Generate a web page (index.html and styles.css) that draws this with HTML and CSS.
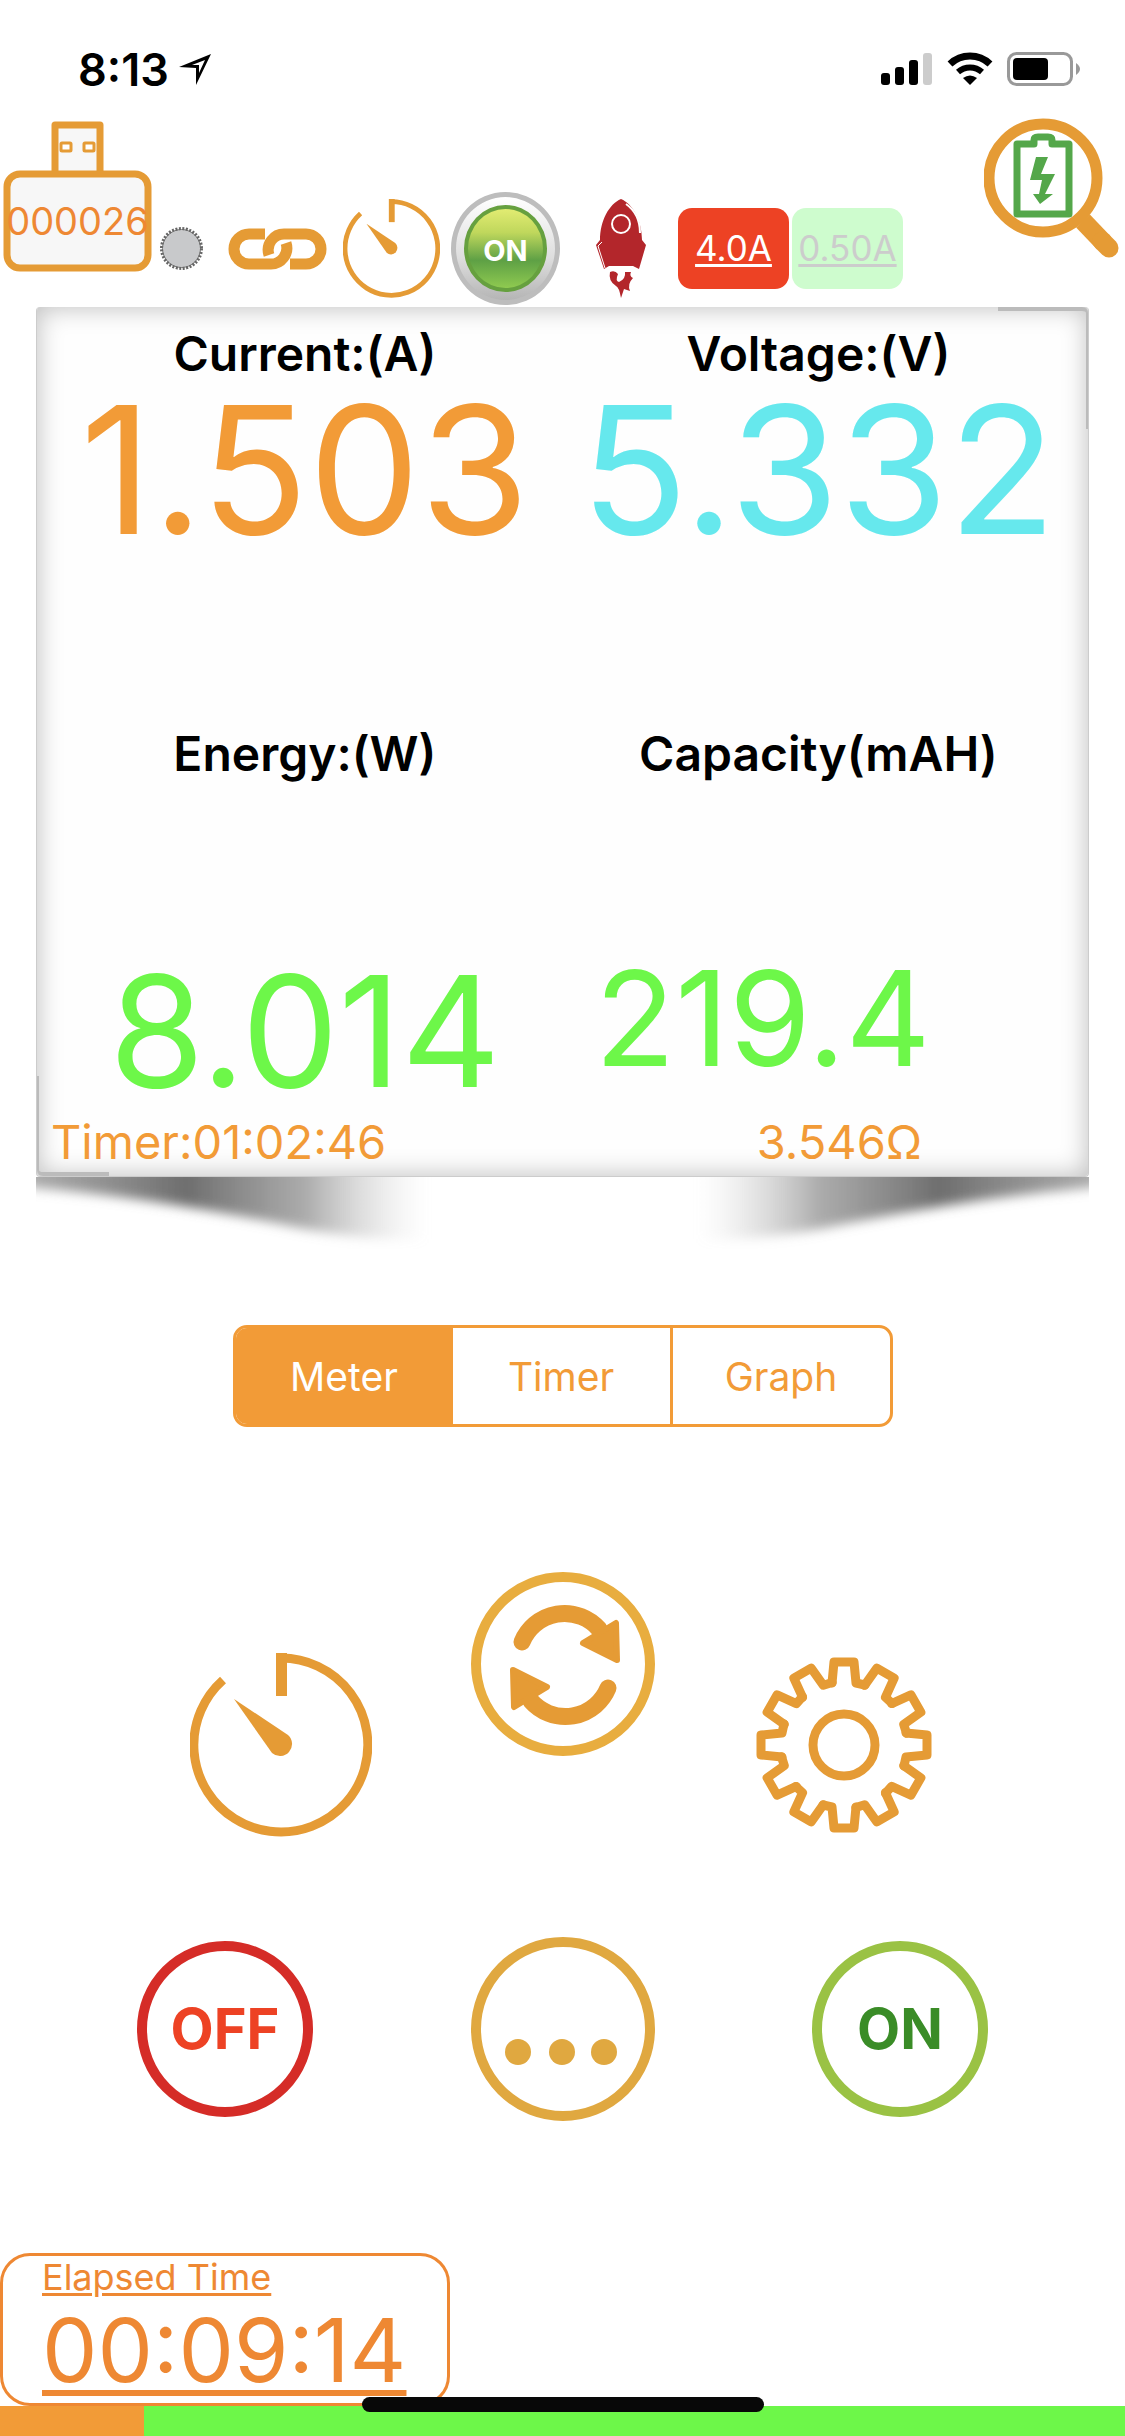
FILE: index.html
```html
<!DOCTYPE html>
<html lang="en">
<head>
    <meta charset="UTF-8">
    <meta name="viewport" content="width=device-width, initial-scale=1.0">
    <title>USB Meter</title>
    <link rel="stylesheet" href="styles.css">
</head>
<body>
    <!-- shared shapes -->
    <svg class="defs" aria-hidden="true">
        <symbol id="gauge" viewBox="-91 -92 182 184" preserveAspectRatio="none">
            <path d="M0 -87 A87 87 0 1 1 -58 -65" fill="none" stroke="#e59b35" stroke-width="9"/>
            <path d="M-5 -92 H6 V-49 H-5 Z" fill="#e59b35"/>
            <path d="M-47 -46 L7 -10 A12 12 0 1 1 -9 8 Z" fill="#e59b35"/>
        </symbol>
        <polyline id="tooth" points="-12,-62 -10,-83 10,-83 12,-62 21,-60"/>
        <g id="arrow">
            <path d="M-41 -22 A46 46 0 0 1 36 -35" fill="none" stroke-width="17" stroke-linecap="round"/>
            <path d="M53 -41 L54 -4 L20 -21 Z" stroke-width="6" stroke-linejoin="round"/>
        </g>
    </svg>

    <header class="status">
        <span class="clock">8:13</span>
        <svg class="location" width="32" height="31" viewBox="0 0 32 31">
            <path d="M0 13 L32 0 L17 31 V14 Z M13 11 L20 11 L20 19 L26 6 Z" fill-rule="evenodd"/>
        </svg>
        <div class="status-icons">
            <svg width="52" height="34" viewBox="0 0 52 34">
                <rect y="21" width="9" height="12" rx="3"/>
                <rect x="14" y="15" width="9" height="18" rx="3"/>
                <rect x="28" y="8" width="9" height="25" rx="3"/>
                <rect x="42" y="1" width="9" height="32" rx="3" fill="#ccc"/>
            </svg>
            <svg width="46" height="34" viewBox="0 0 46 34">
                <path d="M3 12 A29 29 0 0 1 43 12" fill="none" stroke="#000" stroke-width="7"/>
                <path d="M11 20 A18 18 0 0 1 35 20" fill="none" stroke="#000" stroke-width="6"/>
                <path d="M16 26 Q23 21 30 26 L23 33 Z"/>
            </svg>
            <svg width="74" height="34" viewBox="0 0 74 34">
                <rect x="1.5" y="1.5" width="63" height="31" rx="8" fill="none" stroke="#999" stroke-width="3"/>
                <rect x="6" y="6" width="35" height="22" rx="4"/>
                <path d="M69 11 Q77 17 69 23 Z" fill="#999"/>
            </svg>
        </div>
    </header>

    <nav class="toolbar">
        <div class="usb">
            <svg width="149" height="151" viewBox="0 0 149 151">
                <path d="M52 53 V4 H97 V53" fill="#f7f7f7" stroke="#e59b35" stroke-width="7" stroke-linejoin="round"/>
                <rect x="4" y="53" width="141" height="94" rx="13" fill="#f7f7f7" stroke="#e59b35" stroke-width="7"/>
                <rect x="58" y="22" width="10" height="8" rx="1" fill="#fff" stroke="#e59b35" stroke-width="3"/>
                <rect x="81" y="22" width="10" height="8" rx="1" fill="#fff" stroke="#e59b35" stroke-width="3"/>
            </svg>
            <span class="usb-id">000026</span>
        </div>
        <div class="tools">
            <svg class="dot" width="43" height="43" viewBox="0 0 43 43">
                <circle cx="21.5" cy="21.5" r="19" fill="#c8c9cb" stroke="#777" stroke-width="1"/>
                <circle cx="21.5" cy="21.5" r="20" fill="none" stroke="#666" stroke-width="3" stroke-dasharray="2 1.5"/>
            </svg>
            <svg class="chain" width="99" height="42" viewBox="0 0 99 42">
                <g fill="none" stroke="#e59b35" stroke-width="11">
                    <path d="M37 6 H21 A15 15 0 0 0 21 36 H42 A16 16 0 0 0 58 15"/>
                    <path d="M62 36 H78 A15 15 0 0 0 78 6 H57 A16 16 0 0 0 41 27"/>
                </g>
            </svg>
            <button class="icon-button" aria-label="Timer"><svg width="97" height="99"><use href="#gauge"/></svg></button>
            <button class="power"><span>ON</span></button>
            <svg class="rocket" width="51" height="100" viewBox="0 0 51 100">
                <path d="M25 0 C13 5 4 22 4 41 L0 46 L8 70 L13 67 H37 L43 70 L50 46 L46 41 C46 22 37 5 25 0 Z" fill="#b3262b"/>
                <circle cx="25" cy="25" r="9" fill="none" stroke="#fff" stroke-width="2"/>
                <path d="M30 5 Q44 15 44 34" fill="none" stroke="#fff" stroke-width="2"/>
                <path d="M6 43 L2 47 L9 69" fill="none" stroke="#fff" stroke-width="1"/>
                <path d="M14 73 Q19 71 22 75 Q19 82 23 83 Q30 80 29 73 H35 Q33 77 37 79 Q31 85 34 92 L28 90 L25 99 Q23 88 20 87 Q12 82 14 73 Z" fill="#b3262b"/>
            </svg>
            <a class="limit limit-max" href="#">4.0A</a>
            <a class="limit limit-min" href="#">0.50A</a>
        </div>
        <button class="icon-button search" aria-label="Battery details">
            <svg width="136" height="140" viewBox="0 0 136 140">
                <circle cx="59" cy="60" r="54" fill="#fff" stroke="#e59b35" stroke-width="11"/>
                <path d="M99 103 L120 125" stroke="#e59b35" stroke-width="19"/>
                <path d="M118 123 L125 130" stroke="#e59b35" stroke-width="19" stroke-linecap="round"/>
                <path d="M33 26 H50 V22 Q50 19 54 19 H64 Q68 19 68 22 V26 H85 V96 H33 Z" fill="none" stroke="#54a74a" stroke-width="7" stroke-linejoin="round"/>
                <path d="M52 39 H64 L57 56 H71 L61 76 H69 L56 86 L49 76 H55 L58 62 H46 Z" fill="#54a74a"/>
            </svg>
        </button>
    </nav>

    <main>
        <section class="panel">
            <h2>Current:(A)</h2>
            <h2>Voltage:(V)</h2>
            <div class="value current">1.503</div>
            <div class="value voltage">5.332</div>
            <h2>Energy:(W)</h2>
            <h2>Capacity(mAH)</h2>
            <div class="value energy">8.014</div>
            <div class="value capacity">219.4</div>
            <div class="note">Timer:01:02:46</div>
            <div class="note resistance">3.546Ω</div>
        </section>
        <!-- curled paper shadow -->
        <div class="curl">
            <svg width="440" height="72" viewBox="0 0 440 72">
                <defs>
                    <linearGradient id="fade">
                        <stop offset="0" stop-color="#999" stop-opacity="0.8"/>
                        <stop offset="0.4" stop-color="#6e6e6e"/>
                        <stop offset="0.7" stop-color="#888" stop-opacity="0.7"/>
                        <stop offset="1" stop-color="#ccc" stop-opacity="0"/>
                    </linearGradient>
                    <filter id="soft" x="-10%" y="-40%" width="120%" height="180%">
                        <feGaussianBlur stdDeviation="6"/>
                    </filter>
                </defs>
                <path d="M-10 -12 H390 V62 Q320 64 240 46 Q110 20 -10 10 Z" fill="url(#fade)" filter="url(#soft)"/>
            </svg>
            <svg class="curl-right" width="440" height="72" viewBox="0 0 440 72">
                <path d="M-10 -12 H390 V62 Q320 64 240 46 Q110 20 -10 10 Z" fill="url(#fade)" filter="url(#soft)"/>
            </svg>
        </div>

        <div class="tabs" role="tablist">
            <button class="tab active" role="tab" aria-selected="true">Meter</button>
            <button class="tab" role="tab">Timer</button>
            <button class="tab" role="tab">Graph</button>
        </div>

        <div class="actions actions-top">
            <button class="icon-button" aria-label="Timer"><svg width="182" height="184"><use href="#gauge"/></svg></button>
            <button class="icon-button raised" aria-label="Refresh">
                <svg width="184" height="184" viewBox="-92 -92 184 184">
                    <circle r="87" fill="none" stroke="#e8ad3f" stroke-width="10"/>
                    <g fill="#e59b35" stroke="#e59b35">
                        <use href="#arrow"/>
                        <use href="#arrow" transform="rotate(180 2 1)"/>
                    </g>
                </svg>
            </button>
            <button class="icon-button" aria-label="Settings">
                <svg width="184" height="184" viewBox="-92 -92 184 184">
                    <g fill="none" stroke="#e59b35" stroke-width="9" stroke-linejoin="round" stroke-linecap="round">
                        <circle r="31"/>
                        <use href="#tooth"/>
                        <use href="#tooth" transform="rotate(30)"/>
                        <use href="#tooth" transform="rotate(60)"/>
                        <use href="#tooth" transform="rotate(90)"/>
                        <use href="#tooth" transform="rotate(120)"/>
                        <use href="#tooth" transform="rotate(150)"/>
                        <use href="#tooth" transform="rotate(180)"/>
                        <use href="#tooth" transform="rotate(210)"/>
                        <use href="#tooth" transform="rotate(240)"/>
                        <use href="#tooth" transform="rotate(270)"/>
                        <use href="#tooth" transform="rotate(300)"/>
                        <use href="#tooth" transform="rotate(330)"/>
                    </g>
                </svg>
            </button>
        </div>
        <div class="actions actions-bottom">
            <button class="round off">OFF</button>
            <button class="icon-button" aria-label="More">
                <svg width="184" height="184" viewBox="-92 -92 184 184">
                    <g fill="#e0a840">
                        <circle r="87" fill="none" stroke="#e0a840" stroke-width="10"/>
                        <circle cx="-45" cy="23" r="13"/>
                        <circle cx="-1" cy="23" r="13"/>
                        <circle cx="41" cy="23" r="13"/>
                    </g>
                </svg>
            </button>
            <button class="round on">ON</button>
        </div>
    </main>

    <footer>
        <button class="elapsed">
            <span class="elapsed-label">Elapsed Time</span>
            <span class="elapsed-time">00:09:14</span>
        </button>
        <div class="progress"><div class="progress-fill" style="width: 12.8%"></div></div>
        <div class="home-indicator"></div>
    </footer>
</body>
</html>
```
FILE: styles.css
```css
* {
    box-sizing: border-box;
}
body {
    font-family: Inter, "Liberation Sans", sans-serif;
    display: flex;
    flex-direction: column;
    min-height: 100vh;
    margin: 0;
    background: #fff;
    color: #000;
}
svg {
    display: block;
    flex: none;
}
button {
    font-family: inherit;
    padding: 0;
    border: none;
    background: none;
    cursor: pointer;
}
.defs {
    position: absolute;
    width: 0;
    height: 0;
}
.icon-button {
    display: block;
}

/* status bar */
.status {
    display: flex;
    align-items: center;
    height: 118px;
    padding: 20px 44px 0 78px;
}
.clock {
    font-size: 45px;
    font-weight: 600;
}
.location {
    margin-left: 10px;
}
.status-icons {
    display: flex;
    gap: 14px;
    margin-left: auto;
}

/* toolbar */
.toolbar {
    display: flex;
    height: 189px;
    padding: 0 5px 0 3px;
}
.usb {
    position: relative;
    margin-top: 3px;
}
.usb-id {
    position: absolute;
    left: 0;
    right: 0;
    top: 76px;
    font-size: 38px;
    line-height: 48px;
    text-align: center;
    color: #ee8833;
}
.tools {
    display: flex;
    align-items: center;
    align-self: flex-end;
    height: 117px;
    margin-left: 8px;
}
.chain {
    margin: 0 16px 0 25px;
}
.power {
    display: flex;
    width: 109px;
    height: 113px;
    margin: 0 36px 0 11px;
    padding: 8px;
    border: 5px solid #bdbdbd;
    border-radius: 50%;
    background: linear-gradient(#fff, #ddd 60%, #b5b5b5);
}
.power span {
    flex: 1;
    align-self: stretch;
    border: 4px solid #66a03f;
    border-radius: 50%;
    background: linear-gradient(#e2ec72, #bfd75c 30%, #5ea045 65%, #8fca50);
    color: #fff;
    font-size: 29px;
    font-weight: 700;
    line-height: 84px;
}
.limit {
    width: 111px;
    margin-left: 3px;
    border-radius: 14px;
    font-size: 35px;
    line-height: 81px;
    text-align: center;
    text-decoration-thickness: 3px;
    text-underline-offset: 3px;
}
.limit-max {
    margin-left: 31px;
    background: #ed4224;
    color: #fff;
}
.limit-min {
    background: #cefcce;
    color: #ccc;
}
.search {
    align-self: flex-start;
    margin-left: auto;
}

/* readings */
.panel {
    position: relative;
    display: grid;
    grid-template-columns: 12fr 11fr;
    grid-template-rows: 56px 344px 56px 326px 68px;
    margin: 0 36px;
    padding: 19px 24px 0 0;
    border: 1px solid #ccc;
    border-top: none;
    border-radius: 4px;
    background: #fefefe;
    box-shadow: inset 0 0 26px #bbb;
}
.panel::before,
.panel::after {
    content: "";
    position: absolute;
    border: 0 solid #bbb;
}
.panel::before {
    top: 0;
    right: 0;
    width: 88px;
    height: 118px;
    border-width: 4px 2px 0 0;
    border-top-right-radius: 6px;
}
.panel::after {
    bottom: 0;
    left: 0;
    width: 70px;
    height: 96px;
    border-width: 0 0 4px 2px;
    border-bottom-left-radius: 6px;
}
.panel h2 {
    margin: 0;
    font-size: 48px;
    font-weight: 600;
    line-height: 56px;
    text-align: center;
}
.value {
    text-align: center;
}
.current,
.voltage {
    font-size: 177px;
    line-height: 176px;
}
.current {
    color: #f29b37;
}
.voltage {
    color: #66e8ed;
}
.energy,
.capacity {
    align-self: end;
    color: #6df749;
}
.energy {
    font-size: 154px;
    line-height: 154px;
}
.capacity {
    padding-left: 22px;
    font-size: 132px;
    line-height: 180px;
    text-align: left;
}
.note {
    padding-left: 14px;
    font-size: 47px;
    line-height: 68px;
    color: #f29b37;
}
.resistance {
    padding-right: 142px;
    text-align: right;
}
.curl {
    display: flex;
    justify-content: space-between;
    margin: 0 36px;
}
.curl-right {
    transform: scaleX(-1);
}

/* tabs */
.tabs {
    display: flex;
    width: 660px;
    max-width: 100%;
    height: 102px;
    margin: 76px auto 0;
    border: 3px solid #f29b37;
    border-radius: 14px;
    overflow: hidden;
}
.tab {
    flex: 1;
    font-size: 39px;
    color: #f29b37;
}
.tab:last-child {
    border-left: 3px solid #f29b37;
}
.tab.active {
    background: #f29b37;
    color: #fff;
}

/* actions */
.actions {
    display: grid;
    grid-template-columns: repeat(3, 1fr);
    align-items: end;
    justify-items: center;
    margin: 0 auto;
}
.actions-top {
    width: 75%;
    height: 265px;
    margin-top: 145px;
}
.raised {
    align-self: start;
}
.actions-bottom {
    align-items: center;
    width: 90%;
    margin-top: 100px;
}
.round {
    width: 176px;
    height: 176px;
    border: 10px solid;
    border-radius: 50%;
    font-size: 56px;
    font-weight: 700;
}
.off {
    border-color: #d52c27;
    color: #ed4224;
}
.on {
    border-color: #9ac244;
    color: #3a8c27;
}

/* footer */
footer {
    position: relative;
    margin-top: auto;
}
.elapsed {
    display: flex;
    flex-direction: column;
    align-items: flex-start;
    width: 450px;
    padding: 0 39px;
    border: 3px solid #ee8833;
    border-radius: 30px;
    color: #ee8833;
}
.elapsed-label {
    font-size: 36px;
    line-height: 42px;
    text-decoration: underline;
    text-decoration-thickness: 3px;
    text-underline-offset: 3px;
}
.elapsed-time {
    font-size: 88px;
    line-height: 105px;
    text-decoration: underline;
    text-decoration-thickness: 6px;
    text-underline-offset: 8px;
}
.progress {
    height: 30px;
    background: #6df749;
}
.progress-fill {
    height: 100%;
    background: #f29b37;
}
.home-indicator {
    position: absolute;
    bottom: 24px;
    left: 50%;
    width: 402px;
    height: 15px;
    margin-left: -201px;
    border-radius: 8px;
    background: #080808;
}
```
